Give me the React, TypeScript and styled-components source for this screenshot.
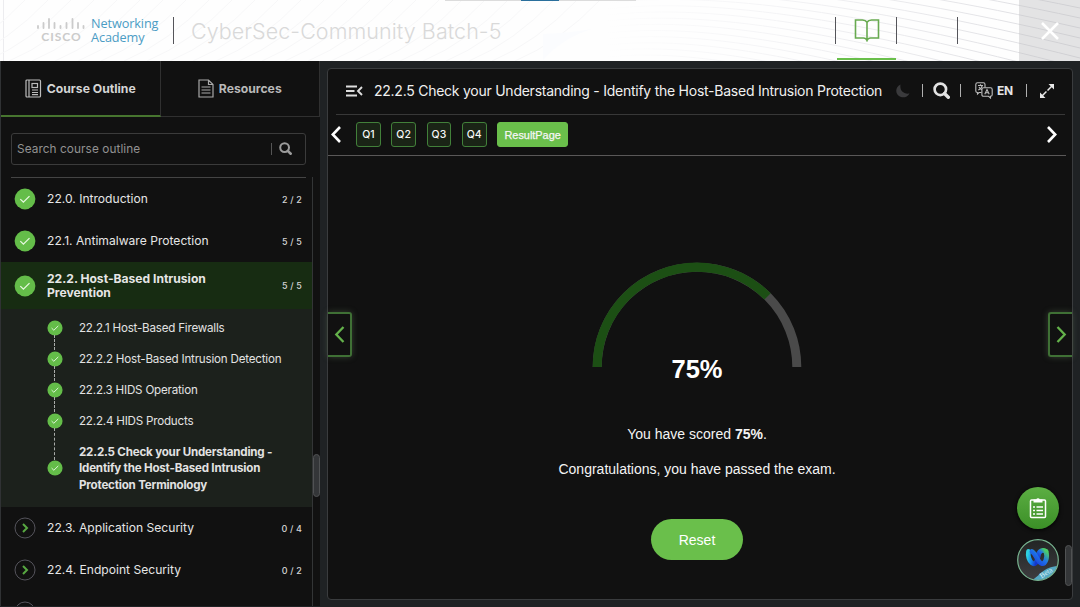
import React from 'react';
import styled, { createGlobalStyle } from 'styled-components';

const GlobalStyle = createGlobalStyle`
  * { box-sizing: border-box; }
  body { margin: 0; background: #1f2224; overflow: hidden; }
  button { font: inherit; border: 0; padding: 0; background: none; color: inherit; }
  p, h1, h2 { margin: 0; font-weight: 400; }
  svg { display: block; flex: none; }
`;

const Page = styled.div`
  width: 1080px;
  height: 607px;
  display: flex;
  flex-direction: column;
  overflow: hidden;
  background: #1f2224;
  color: #e4e4e4;
  font-family: Inter, 'Liberation Sans', sans-serif;
`;

/* ---------- header ---------- */

const Header = styled.header`
  position: relative;
  height: 61px;
  flex: none;
  display: flex;
  align-items: center;
  background: #fefefe;
  overflow: hidden;
`;

const Waves = styled.svg`
  position: absolute;
  inset: 0;
`;

const Brand = styled.div`
  position: relative;
  display: flex;
  align-items: center;
  width: 173px;
  padding: 0 0 2px 36px;
`;

const BrandName = styled.div`
  display: flex;
  flex-direction: column;
  margin-left: 5px;
  font: 400 12.7px/14px 'Open Sans', sans-serif;
  letter-spacing: -0.1px;
  color: #4b9cc4;
  white-space: nowrap;
`;

const CiscoMark = styled.div`
  width: 50px;
  display: flex;
  flex-direction: column;
  align-items: center;
`;

const CiscoWord = styled.span`
  font: 700 12px/11px Lato, sans-serif;
  letter-spacing: 1px;
  color: #cbcbcb;
  margin: 1px 0 0 1px;
`;

const HeaderRule = styled.span`
  position: relative;
  width: 1px;
  height: 27px;
  background: #55555a;
`;

const CourseName = styled.h1`
  position: relative;
  flex: 1;
  padding-left: 17px;
  font-size: 21.5px;
  line-height: 28px;
  font-weight: 300;
  letter-spacing: 0.06px;
  color: #d9d9d9;
  white-space: nowrap;
`;

const HeaderTab = styled.div<{ $active?: boolean }>`
  position: relative;
  width: 60px;
  height: 61px;
  display: flex;
  justify-content: center;
  padding: 18px 0 0 1px;
  background: linear-gradient(${(p) => (p.$active ? '#6abf4b, #6abf4b' : 'transparent, transparent')}) 1px 58px / 60px 2px
    no-repeat;
`;

const CloseButton = styled.button`
  position: relative;
  width: 61px;
  height: 61px;
  margin-left: 1px;
  display: flex;
  align-items: center;
  justify-content: center;
  background: rgba(190, 191, 194, 0.42);
`;

/* ---------- sidebar ---------- */

const Body = styled.div`
  flex: 1;
  min-height: 0;
  display: flex;
`;

const Sidebar = styled.aside`
  width: 320px;
  height: 545px;
  border-left: 1px solid #303234;
  background: #111;
  display: flex;
  flex-direction: column;
  overflow: hidden;
`;

const SideTabs = styled.div`
  display: flex;
  height: 56px;
  flex: none;
`;

const SideTab = styled.button<{ $active?: boolean }>`
  flex: 1;
  display: flex;
  align-items: center;
  justify-content: center;
  gap: 5px;
  font-size: 12.2px;
  font-weight: 700;
  white-space: nowrap;
  color: ${(p) => (p.$active ? '#d4d4d4' : '#b9b9b9')};
  border-right: 1px solid #303030;
  border-bottom: ${(p) => (p.$active ? '2px solid #47752f' : '1px solid #303030')};
`;

const SearchBox = styled.div`
  width: 295px;
  height: 32px;
  flex: none;
  margin: 16px 0 12px 10px;
  padding: 0 13px 1px 5px;
  display: flex;
  align-items: center;
  border: 1px solid #3b3b3b;
  border-radius: 3px;
  font-size: 11.8px;
  color: #929292;
`;

const SearchHint = styled.span`
  flex: 1;
  letter-spacing: 0.08px;
`;

const SearchRule = styled.span`
  width: 1px;
  height: 12px;
  margin-right: 7px;
  background: #555;
`;

const ListFrame = styled.div`
  flex: 1;
  min-height: 0;
  display: flex;
`;

const List = styled.div`
  width: 312px;
  border-right: 1px solid #333536;
  overflow: hidden;
`;

const ListRule = styled.div`
  height: 1px;
  width: 295px;
  margin-left: 10px;
  background: #444;
`;

const ScrollTrack = styled.div`
  width: 7px;
  padding-top: 277px;
`;

const Thumb = styled.div<{ $h: number }>`
  width: 7px;
  height: ${(p) => p.$h}px;
  border-radius: 4px;
  background: #343638;
  border: 1px solid #505253;
`;

const ModuleRow = styled.div<{ $active?: boolean }>`
  height: ${(p) => (p.$active ? 47 : 42)}px;
  display: flex;
  align-items: center;
  padding: 0 10px 0 12.5px;
  background: ${(p) => (p.$active ? '#172c12' : 'transparent')};
`;

const ModuleName = styled.span<{ $active?: boolean }>`
  flex: 1;
  margin-left: 11.5px;
  font-size: 12.1px;
  line-height: 13.5px;
  white-space: pre-line;
  font-weight: ${(p) => (p.$active ? 700 : 400)};
  color: #e6e6e6;
`;

const ModuleCount = styled.span`
  font-size: 9px;
  font-weight: 500;
  letter-spacing: 0.15px;
  color: #d5d5d5;
`;

const Topics = styled.div`
  background: #1c211c;
  height: 198px;
  padding: 3px 0 7px 45.5px;
`;

const Topic = styled.div<{ $last?: boolean }>`
  position: relative;
  height: ${(p) => (p.$last ? 64 : 31)}px;
  display: flex;
  align-items: center;
  gap: 16.5px;
`;

const Link = styled.span<{ $h: number }>`
  position: absolute;
  left: 7.5px;
  top: 23px;
  height: ${(p) => p.$h}px;
  border-left: 1px dashed #a9aca9;
`;

const TopicName = styled.span<{ $bold?: boolean }>`
  padding-top: 1px;
  font-size: 11.6px;
  line-height: 16.6px;
  font-weight: ${(p) => (p.$bold ? 700 : 400)};
  letter-spacing: ${(p) => (p.$bold ? -0.2 : -0.2)}px;
  white-space: pre;
  color: #e2e2e2;
`;

/* ---------- main panel ---------- */

const Panel = styled.main`
  position: relative;
  width: 746px;
  height: 532px;
  margin: 7px 0 0 7px;
  background: #111;
  border: 1px solid #3a3c3e;
  border-radius: 4px;
  display: flex;
  flex-direction: column;
`;

const Toolbar = styled.div`
  height: 46px;
  flex: none;
  margin: 0 7px 0 8px;
  padding: 0 10px 2px;
  display: flex;
  align-items: center;
  border-bottom: 1px solid #383838;
`;

const PageTitle = styled.h2`
  width: 533px;
  flex: none;
  padding-left: 11px;
  font-size: 14px;
  line-height: 20px;
  letter-spacing: -0.25px;
  white-space: nowrap;
  color: #f0f0f0;
`;

const ToolRule = styled.span<{ $l: number; $r: number }>`
  width: 1px;
  height: 13px;
  flex: none;
  margin: 0 ${(p) => p.$r}px 0 ${(p) => p.$l}px;
  background: #b0b0b0;
`;

const Lang = styled.span`
  width: 17px;
  flex: none;
  margin-left: 4px;
  font-size: 12px;
  font-weight: 700;
  letter-spacing: -0.3px;
`;

const QuestionBar = styled.div`
  height: 41px;
  flex: none;
  margin-right: 6px;
  padding: 0 9px 1px 3px;
  display: flex;
  align-items: center;
  border-bottom: 1px solid #5a5858;
`;

const QuestionList = styled.div`
  flex: 1;
  display: flex;
  gap: 10.6px;
  margin-left: 15px;
`;

const Question = styled.button<{ $result?: boolean }>`
  width: ${(p) => (p.$result ? 71 : 24.7)}px;
  height: 25px;
  border-radius: 3px;
  border: 1px solid ${(p) => (p.$result ? '#6abf4b' : '#42803a')};
  background: ${(p) => (p.$result ? '#6abf4b' : '#1a2416')};
  color: #f6f6f6;
  font: ${(p) => (p.$result ? 400 : 500)} ${(p) => (p.$result ? 10.9 : 10.5)}px/24px ${(p) =>
    p.$result ? "'Liberation Sans'" : 'Inter'}, sans-serif;
  -webkit-text-stroke: ${(p) => (p.$result ? 0.25 : 0)}px #f6f6f6;
  white-space: nowrap;
`;

const Result = styled.section`
  flex: 1;
  display: flex;
  flex-direction: column;
  align-items: center;
  padding: 106px 6px 0 0;
  font-family: 'Liberation Sans', Arial, sans-serif;
  color: #f4f4f4;
`;

const Percent = styled.div`
  margin-top: -12px;
  font-size: 25.5px;
  line-height: 28px;
  font-weight: 700;
  color: #fff;
`;

const Message = styled.p<{ $top: number }>`
  margin-top: ${(p) => p.$top}px;
  font-size: 14px;
  line-height: 18px;
  white-space: nowrap;
`;

const ResetButton = styled.button`
  width: 92px;
  height: 41px;
  margin-top: 41px;
  border-radius: 21px;
  background: #6abf4b;
  color: #fff;
  font-size: 14px;
`;

const SideArrow = styled.button<{ $side: 'left' | 'right' }>`
  position: absolute;
  top: 243px;
  ${(p) => p.$side}: 0;
  width: 24px;
  height: 45px;
  display: flex;
  align-items: center;
  justify-content: center;
  border: 2px solid #3f7035;
  border-${(p) => p.$side}: 0;
  border-radius: ${(p) => (p.$side === 'left' ? '0 3px 3px 0' : '3px 0 0 3px')};
  background: #111;
  box-shadow: 0 0 6px rgba(120, 150, 110, 0.35);
`;

const Floating = styled.div`
  position: absolute;
  right: 13.5px;
  top: 418px;
  display: flex;
  flex-direction: column;
  gap: 10px;
`;

const RoundButton = styled.button`
  width: 42px;
  height: 42px;
  display: flex;
  align-items: center;
  justify-content: center;
  border-radius: 50%;
  background: linear-gradient(#5cae43, #3b8f27);
  box-shadow: 0 1px 4px #000;
`;

const PanelThumb = styled.div`
  position: absolute;
  right: 0;
  top: 476px;
`;

/* ---------- drawings ---------- */

const Check = ({ size }: { size: number }) => (
  <svg width={size} height={size} viewBox="0 0 22 22">
    <circle cx="11" cy="11" r="10.4" fill="#64bd49" />
    <path d="M6.3 11.1l3.1 3 6.1-6" fill="none" stroke="#e7f8e0" strokeWidth="1.3" />
  </svg>
);

const Closed = () => (
  <svg width="22" height="22" viewBox="0 0 22 22">
    <circle cx="11" cy="11" r="10" fill="#111" stroke="#55545c" />
    <path d="M9 7l4 4-4 4" fill="none" stroke="#58a842" strokeWidth="2" />
  </svg>
);

const Magnifier = ({ size, color }: { size: number; color: string }) => (
  <svg width={size} height={size} viewBox="0 0 16 16" fill="none" stroke={color}>
    <circle cx="6.9" cy="6.9" r="5.4" strokeWidth="2.5" />
    <path d="M10.8 10.9l3.6 3.500" strokeWidth="3.2" strokeLinecap="round" />
  </svg>
);

const Chevron = ({ d, w, h, color, sw }: { d: 'l' | 'r'; w: number; h: number; color: string; sw: number }) => (
  <svg width={w} height={h} viewBox="0 0 10 17" fill="none" stroke={color} strokeWidth={sw}>
    <path d={d === 'l' ? 'M9 1L1.8 8.5 9 16' : 'M1 1l7.2 7.5L1 16'} />
  </svg>
);

const range = (n: number) => Array.from({ length: n }, (_, i) => i);

const HeaderWaves = () => (
  <Waves width="1080" height="61" fill="none">
    <defs>
      <linearGradient id="waveFade" gradientUnits="userSpaceOnUse" x1="600" x2="1080" y1="0" y2="0">
        <stop stopColor="#fefefe" />
        <stop offset="0.350" stopColor="#f4f4f6" />
        <stop offset="1" stopColor="#dcdce0" />
      </linearGradient>
    </defs>
    <path d="M3.5 0v61" stroke="#ececef" />
    <g stroke="#f7f7f8">
      {range(26).map((i) => (
        <path key={i} d={`M${i * 23 - 60} 61Q${i * 23 - 15} 42 ${i * 23 + 25} 0`} />
      ))}
    </g>
    <path d="M543 60Q562 38 592 29Q570 33 543 34z" fill="#fbfcfe" />
    <g stroke="url(#waveFade)">
      {range(22).map((i) => (
        <path key={i} d={`M600 ${i * 6 - 62}C700 ${i * 6 - 76} 850 ${i * 8 - 80} 1080 ${i * 10 - 42}`} />
      ))}
    </g>
    <path d="M445 .5h191" stroke="#dcdcdc" />
    <path d="M521 .5h38" stroke="#2a6f9c" />
  </Waves>
);

const modules = [
  { name: '22.0. Introduction', count: '2 / 2', done: true },
  { name: '22.1. Antimalware Protection', count: '5 / 5', done: true },
  { name: '22.2. Host-Based Intrusion\nPrevention', count: '5 / 5', done: true, active: true },
  { name: '22.3. Application Security', count: '0 / 4' },
  { name: '22.4. Endpoint Security', count: '0 / 2' },
];

const topics = [
  '22.2.1 Host-Based Firewalls',
  '22.2.2 Host-Based Intrusion Detection',
  '22.2.3 HIDS Operation',
  '22.2.4 HIDS Products',
  '22.2.5 Check your Understanding -\nIdentify the Host-Based Intrusion\nProtection Terminology',
];

const SidebarPanel = () => (
  <Sidebar>
    <SideTabs>
      <SideTab $active>
        <svg width="17" height="19" viewBox="0 0 17 19" fill="none" stroke="#bcbcbc" strokeWidth="1.2">
          <rect x="1" y="1" width="14.5" height="17" rx="1" />
          <path d="M4 1v17M7 11h6M7 13.5h6M7 15.6h6" />
          <rect x="7" y="4.5" width="5.5" height="4" />
        </svg>
        Course Outline
      </SideTab>
      <SideTab>
        <svg width="16" height="19" viewBox="0 0 16 19" fill="none" stroke="#a9a9a9" strokeWidth="1.2">
          <path d="M1 1h9.5L15 5.5V18H1zM10.5 1v4.5H15M3.5 8h9M3.5 11h9M3.5 14h9" />
        </svg>
        Resources
      </SideTab>
    </SideTabs>
    <SearchBox>
      <SearchHint>Search course outline</SearchHint>
      <SearchRule />
      <Magnifier size={13} color="#9b9b9b" />
    </SearchBox>
    <ListFrame>
      <List>
        <ListRule />
        {modules.map((m) => (
          <React.Fragment key={m.name}>
            <ModuleRow $active={m.active}>
              {m.done ? <Check size={22} /> : <Closed />}
              <ModuleName $active={m.active}>{m.name}</ModuleName>
              <ModuleCount>{m.count}</ModuleCount>
            </ModuleRow>
            {m.active && (
              <Topics>
                {topics.map((t, i) => (
                  <Topic key={t} $last={i === 4}>
                    {i < 4 && <Link $h={i === 3 ? 32 : 15} />}
                    <Check size={16} />
                    <TopicName $bold={i === 4}>{t}</TopicName>
                  </Topic>
                ))}
              </Topics>
            )}
          </React.Fragment>
        ))}
        <ModuleRow>
          <Closed />
        </ModuleRow>
      </List>
      <ScrollTrack>
        <Thumb $h={43} />
      </ScrollTrack>
    </ListFrame>
  </Sidebar>
);

export default function App() {
  return (
    <Page>
      <GlobalStyle />
      <Header>
        <HeaderWaves />
        <Brand>
          <CiscoMark>
            <svg width="50" height="13" stroke="#cbcbcb" strokeWidth="1.8" strokeLinecap="round">
              <path d="M2 9v2M7.5 6v5M13 2v9M18.5 6v5M24.5 9v2M30.500 6v5M36.500 2v9M42 6v5M47.500 9v2" />
            </svg>
            <CiscoWord>CISCO</CiscoWord>
          </CiscoMark>
          <BrandName>
            <span>Networking</span>
            <span>Academy</span>
          </BrandName>
        </Brand>
        <HeaderRule />
        <CourseName>CyberSec-Community Batch-5</CourseName>
        <HeaderRule />
        <HeaderTab $active>
          <svg width="26" height="24" viewBox="0 0 26 24" fill="none" stroke="#68aa50" strokeWidth="1.6">
            <path d="M13 4.200Q11.500 2 8.500 2H1.500v18h8q2.500 0 3.500 2.500 1-2.500 3.500-2.500h8V2h-7Q14.500 2 13 4.200zV22" />
          </svg>
        </HeaderTab>
        <HeaderRule />
        <HeaderTab />
        <HeaderRule />
        <HeaderTab />
        <CloseButton aria-label="Close">
          <svg width="18" height="18" stroke="#fff" strokeWidth="2.500">
            <path d="M1 1l16 16M17 1L1 17" />
          </svg>
        </CloseButton>
      </Header>
      <Body>
        <SidebarPanel />
        <Panel>
          <Toolbar>
            <svg width="17" height="12" fill="none" stroke="#dedede" strokeWidth="1.900">
              <path d="M0 1.500h11M0 6h8.500M0 10.500h11M16 2l-4 4 4 4" />
            </svg>
            <PageTitle>22.2.5 Check your Understanding - Identify the Host-Based Intrusion Protection</PageTitle>
            <svg width="14" height="14" viewBox="0 0 14 14">
              <path d="M4.500.5C3.500 6 7 10.500 13.500 9.500 11.500 13 8 14 5 13-1 11-1.500 3.500 4.500.5z" fill="#3a3a3c" />
            </svg>
            <ToolRule $l={12} $r={10} />
            <Magnifier size={17} color="#e2e2e2" />
            <ToolRule $l={10} $r={14} />
            <svg width="18" height="17" viewBox="0 0 18 17" fill="none" stroke="#bdbdbd" strokeWidth="1.1">
              <path d="M6.500 10.500H4L2.500 12v-1.500Q.8 10.500.8 9V2.500Q.8.8 2.500.8h6Q10 .8 10 2.500v3" />
              <path d="M3 3.500h5M5.500 2.200v1.300M7.200 3.500Q6.500 7 3.200 8M4 5q1 2 3 2.700" />
              <path d="M8.500 5.800h7q1.700 0 1.700 1.700v5.300q0 1.500-1.700 1.500V16l-2-1.700h-5q-1.600 0-1.600-1.500V7.500q0-1.700 1.600-1.700z" />
              <path d="M9.800 12.300L12 7.500l2.200 4.800M10.600 10.700h2.800" />
            </svg>
            <Lang>EN</Lang>
            <ToolRule $l={12} $r={12} />
            <svg width="16" height="16" viewBox="0 0 16 16" fill="#e8e8e8" stroke="#e8e8e8">
              <path d="M3 13L13 3" strokeWidth="1.500" strokeDasharray="6.300 1.500" />
              <path d="M9.500 1H15v5.500zM1 9.500V15h5.500z" stroke="none" />
            </svg>
          </Toolbar>
          <QuestionBar>
            <Chevron d="l" w={10} h={17} color="#fff" sw={2.6} />
            <QuestionList>
              {['Q1', 'Q2', 'Q3', 'Q4'].map((q) => (
                <Question key={q}>{q}</Question>
              ))}
              <Question $result>ResultPage</Question>
            </QuestionList>
            <Chevron d="r" w={10} h={17} color="#fff" sw={2.6} />
          </QuestionBar>
          <Result>
            <svg width="210" height="105" viewBox="0 0 210 105" fill="none" strokeWidth="9">
              <path d="M5.200 105A99.800 99.800 0 0 1 204.800 105" stroke="#4a4a4a" />
              <path d="M5.200 105A99.800 99.800 0 0 1 175.570 34.430" stroke="#1c4f14" />
            </svg>
            <Percent>75%</Percent>
            <Message $top={42}>
              You have scored <b>75%</b>.
            </Message>
            <Message $top={17}>Congratulations, you have passed the exam.</Message>
            <ResetButton>Reset</ResetButton>
          </Result>
          <SideArrow $side="left" aria-label="Previous">
            <Chevron d="l" w={11} h={17} color="#64b24b" sw={2.3} />
          </SideArrow>
          <SideArrow $side="right" aria-label="Next">
            <Chevron d="r" w={11} h={17} color="#64b24b" sw={2.3} />
          </SideArrow>
          <Floating>
            <RoundButton aria-label="Survey">
              <svg width="18" height="22" viewBox="0 0 18 22" fill="none" stroke="#fff" strokeWidth="1.500">
                <rect x="1.500" y="3" width="15" height="17.500" rx="1" />
                <path d="M4 10h2M4 13.500h2M4 17h2M7.500 10h6.500M7.500 13.500h6.500M7.500 17h6.500" />
                <path d="M4.500 5.500V2.500h2.700a1.900 1.900 0 0 1 3.600 0h2.700v3z" fill="#fff" stroke="none" />
              </svg>
            </RoundButton>
            <svg width="42" height="42" viewBox="0 0 42 42">
              <defs>
                <clipPath id="disc">
                  <circle cx="21" cy="21" r="20" />
                </clipPath>
                <linearGradient id="dark" x2="0" y2="1">
                  <stop stopColor="#222524" />
                  <stop offset="1" stopColor="#3e3d40" />
                </linearGradient>
                <linearGradient id="loopA" x2="1" y2="0.300">
                  <stop stopColor="#2ed1de" />
                  <stop offset="0.500" stopColor="#1689f2" />
                  <stop offset="1" stopColor="#1435c8" />
                </linearGradient>
                <linearGradient id="loopB" x1="0" x2="1" y1="1" y2="0">
                  <stop stopColor="#1a35d8" />
                  <stop offset="0.550" stopColor="#1d72e8" />
                  <stop offset="1" stopColor="#4ccf68" />
                </linearGradient>
              </defs>
              <circle cx="21" cy="21" r="20.300" fill="url(#dark)" />
              <g fill="none" strokeWidth="4.800" strokeLinecap="round">
                <path d="M20.500 16C21 24 17.500 26 15 24S10.500 17 11.500 12.500" stroke="url(#loopA)" />
                <path d="M21 18C21.500 11 26 10.500 29 12.500" stroke="url(#loopB)" />
                <path d="M29 12.500C31 19 28 25.500 24.500 24.500S19 15 15 12.500" stroke="url(#loopB)" />
              </g>
              <g clipPath="url(#disc)">
                <path d="M13 42C22 39 25 27.500 42 27V42z" fill="#55a9c4" />
                <text x="24.500" y="39.500" transform="rotate(-32 24.500 39.500)" fontFamily="Liberation Serif, serif" fontSize="7.500" fill="#d4edf4">
                  Beta
                </text>
              </g>
              <circle cx="21" cy="21" r="20.300" fill="none" stroke="#79b591" strokeWidth="1.200" />
            </svg>
          </Floating>
          <PanelThumb>
            <Thumb $h={41} />
          </PanelThumb>
        </Panel>
      </Body>
    </Page>
  );
}
